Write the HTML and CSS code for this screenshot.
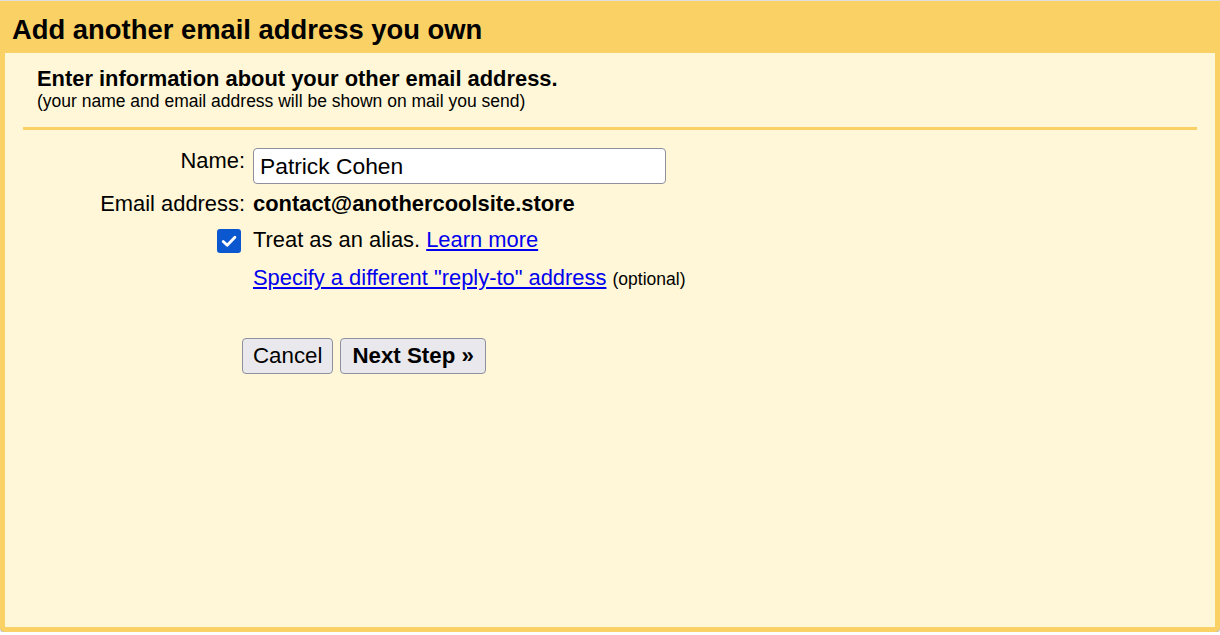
FILE: index.html
```html
<!DOCTYPE html>
<html>
<head>
<meta charset="utf-8">
<title>Add another email address you own</title>
<link rel="stylesheet" href="styles.css">
</head>
<body>
<div class="dialog">
  <div class="title">Add another email address you own</div>
  <div class="panel">
    <div class="intro">
      <div class="heading">Enter information about your other email address.</div>
      <div class="note">(your name and email address will be shown on mail you send)</div>
    </div>
    <div class="rule"></div>
    <div class="form">
      <div class="label">Name:</div>
      <div class="field"><input class="text-input" type="text" value="Patrick Cohen"></div>

      <div class="label row-email">Email address:</div>
      <div class="value row-email">contact@anothercoolsite.store</div>

      <div class="label row-alias"><span class="checkbox"><svg width="24" height="24" viewBox="0 0 24 24"><path d="M6.2 12.4 L10.2 16.3 L17.9 8.3" fill="none" stroke="#fff" stroke-width="2.8" stroke-linecap="round" stroke-linejoin="round"/></svg></span></div>
      <div class="value-plain row-alias">Treat as an alias. <a href="#" class="link">Learn more</a></div>

      <div class="label row-reply"></div>
      <div class="value-plain row-reply"><a href="#" class="link">Specify a different "reply-to" address</a> <span class="optional">(optional)</span></div>
    </div>
    <div class="buttons">
      <button class="btn">Cancel</button>
      <button class="btn btn-bold">Next Step »</button>
    </div>
  </div>
</div>
</body>
</html>
```

FILE: styles.css
```css
html, body {
  margin: 0;
  padding: 0;
  background: #ffffff;
}
body {
  border-top: 1px solid #dedede;
  font-family: "Liberation Sans", Arial, sans-serif;
  color: #000;
}
.dialog {
  background: #fad165;
  height: 631px;
  box-sizing: border-box;
  padding: 0 5px 5px 5px;
  border-radius: 0 0 5px 5px;
  box-shadow: 0 1px 2px rgba(0, 0, 0, 0.35);
  display: flex;
  flex-direction: column;
}
.title {
  font-size: 27.4px;
  font-weight: bold;
  line-height: 42px;
  padding: 8px 0 2px 7px;
  white-space: nowrap;
}
.panel {
  background: #fff7d7;
  flex: 1;
  padding-top: 14px;
}
.intro {
  padding-left: 32px;
}
.heading {
  font-size: 21.9px;
  font-weight: bold;
  line-height: 24px;
}
.note {
  font-size: 17.5px;
  line-height: 20px;
}
.rule {
  height: 3px;
  background: #fad165;
  margin: 16px 18px 18px 18px;
}
.form {
  display: grid;
  grid-template-columns: 240px 1fr;
  column-gap: 8px;
  align-items: start;
}
.label {
  font-size: 21.9px;
  line-height: 26px;
  text-align: right;
  white-space: nowrap;
}
.text-input {
  display: block;
  box-sizing: border-box;
  width: 413px;
  height: 36px;
  margin: 0;
  padding: 0 6px;
  border: 1px solid #8f8f9d;
  border-radius: 4px;
  background: #fff;
  font-family: "Liberation Sans", Arial, sans-serif;
  font-size: 22.8px;
  color: #000;
  outline: none;
}
.value {
  font-size: 21.9px;
  line-height: 26px;
  font-weight: bold;
  white-space: nowrap;
}
.value-plain {
  font-size: 21.9px;
  line-height: 26px;
  white-space: nowrap;
}
.row-email {
  margin-top: 7px;
}
.row-alias {
  margin-top: 10px;
}
.row-reply {
  margin-top: 12px;
}
.checkbox {
  display: inline-block;
  width: 24px;
  height: 24px;
  margin-top: 2px;
  margin-right: 4px;
  background: #0b57d0;
  border-radius: 3px;
  vertical-align: top;
}
.checkbox svg {
  display: block;
}
.link {
  color: #0000ee;
  text-decoration: underline;
}
.optional {
  font-size: 17.5px;
}
.buttons {
  display: flex;
  gap: 7px;
  padding-left: 237px;
  margin-top: 46px;
}
.btn {
  height: 36px;
  box-sizing: border-box;
  padding: 0 10px;
  margin: 0;
  background: #e9e9ed;
  border: 1px solid #8f8f9d;
  border-radius: 4px;
  font-family: "Liberation Sans", Arial, sans-serif;
  font-size: 22.3px;
  color: #000;
}
.btn-bold {
  font-weight: bold;
  padding: 0 11px;
}
```
